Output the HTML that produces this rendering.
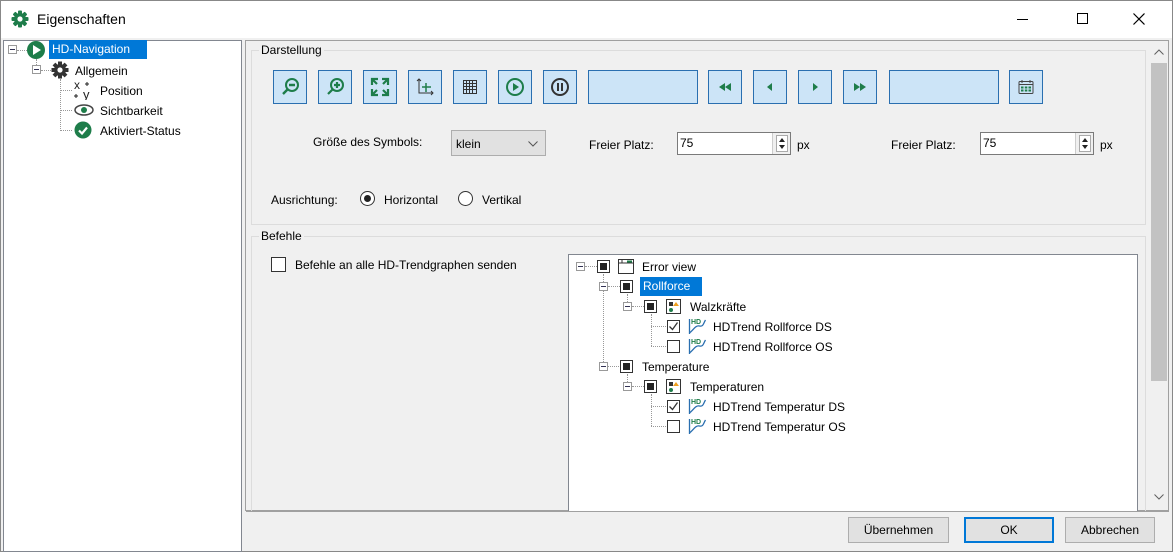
<!DOCTYPE html>
<html><head><meta charset="utf-8"><style>
*{box-sizing:border-box;margin:0;padding:0}
body{width:1173px;height:552px;background:#f0f0f0;font-family:"Liberation Sans",sans-serif;font-size:12px;color:#000;position:relative;overflow:hidden}
.a{position:absolute}
.win{left:0;top:0;width:1173px;height:552px;border:1px solid #888}
.title{left:1px;top:1px;width:1171px;height:37px;background:#fff}
.btn{position:absolute;width:34px;height:34px;background:#cce4f7;border:1px solid #2a6fb0;display:flex;align-items:center;justify-content:center}
.wide{width:110px}
.grp{position:absolute;border:1px solid #dcdcdc}
.lbl{position:absolute;background:#f0f0f0;padding:0 2px}
.inp{position:absolute;background:#fff;border:1px solid #7a7a7a;height:23px;padding:3px 2px}
.spin{position:absolute;right:0;top:0;width:18px;height:21px;border-left:1px solid #ccc;background:#f0f0f0}
.pb{position:absolute;top:517px;height:26px;border:1px solid #adadad;background:#e1e1e1;text-align:center;line-height:24px}
.cb{position:absolute;width:13px;height:13px;border:1px solid #333;background:#fff}
.cbf{position:absolute;width:13px;height:13px;border:1px solid #333;background:#fff}
.cbf:after{content:"";position:absolute;left:2px;top:2px;width:7px;height:7px;background:#222}
.pm{position:absolute;width:9px;height:9px;border:1px solid #999;background:#fff}
.pm:after{content:"";position:absolute;left:1px;top:3px;width:5px;height:1px;background:#335}
.dl{position:absolute;border-left:1px dotted #999}
.dh{position:absolute;border-top:1px dotted #999}
</style></head><body>
<div class="a win"></div>
<div class="a title"></div>
<svg class="a" style="left:11px;top:10px" width="18" height="18" viewBox="0 0 18 18"><g fill="#1e7d4a"><circle cx="9" cy="9" r="6"/><rect x="7" y="0.5" width="4" height="17" rx="1"/><rect x="0.5" y="7" width="17" height="4" rx="1"/><rect x="7" y="0.5" width="4" height="17" rx="1" transform="rotate(45 9 9)"/><rect x="7" y="0.5" width="4" height="17" rx="1" transform="rotate(-45 9 9)"/></g><circle cx="9" cy="9" r="2.6" fill="#fff"/></svg>
<div class="a" style="left:37px;top:11px;font-size:14px">Eigenschaften</div>
<div class="a" style="left:1017px;top:19px;width:11px;height:1px;background:#000"></div>
<div class="a" style="left:1077px;top:13px;width:11px;height:11px;border:1px solid #000"></div>
<svg class="a" style="left:1133px;top:13px" width="12" height="12"><path d="M0.5 0.5l11 11M11.5 0.5l-11 11" stroke="#000" stroke-width="1.2"/></svg>

<!-- left tree -->
<div class="a" style="left:3px;top:40px;width:239px;height:512px;background:#fff;border:1px solid #828790"></div>
<div class="pm" style="left:8px;top:45px"></div>
<div class="dh" style="left:17px;top:50px;width:10px"></div>
<div class="a" style="left:27px;top:41px;width:18px;height:18px;border-radius:50%;background:#1e7d4a"></div>
<div class="a" style="left:33px;top:45px;width:0;height:0;border-left:8px solid #fff;border-top:5px solid transparent;border-bottom:5px solid transparent"></div>
<div class="a" style="left:49px;top:40px;width:98px;height:19px;background:#0078d7;color:#fff;padding:2px 3px">HD-Navigation</div>
<div class="dl" style="left:36px;top:59px;height:6px"></div>
<div class="pm" style="left:32px;top:65px"></div>
<div class="dh" style="left:41px;top:70px;width:10px"></div>
<svg class="a" style="left:51px;top:61px" width="18" height="18" viewBox="0 0 18 18"><g fill="#333"><circle cx="9" cy="9" r="6"/><rect x="7" y="0.5" width="4" height="17"/><rect x="0.5" y="7" width="17" height="4"/><rect x="7" y="0.5" width="4" height="17" transform="rotate(45 9 9)"/><rect x="7" y="0.5" width="4" height="17" transform="rotate(-45 9 9)"/></g><circle cx="9" cy="9" r="2.6" fill="#fff"/></svg>
<div class="a" style="left:75px;top:64px">Allgemein</div>
<div class="dl" style="left:60px;top:79px;height:52px"></div>
<div class="dh" style="left:60px;top:90px;width:12px"></div>
<div class="dh" style="left:60px;top:110px;width:12px"></div>
<div class="dh" style="left:60px;top:130px;width:12px"></div>
<svg class="a" style="left:73px;top:80px" width="22" height="20"><text x="1" y="9" font-size="12" font-family="Liberation Sans" fill="#222">x</text><text x="10" y="19" font-size="13" font-family="Liberation Sans" fill="#222">y</text><path d="M3 14v4M1 16h4M14 2v4M12 4h4" stroke="#222" stroke-width="1"/></svg>
<div class="a" style="left:100px;top:84px">Position</div>
<svg class="a" style="left:74px;top:103px" width="20" height="14"><ellipse cx="10" cy="7" rx="9" ry="5" fill="none" stroke="#444" stroke-width="1.5"/><circle cx="10" cy="7" r="3" fill="#1e7d4a"/></svg>
<div class="a" style="left:100px;top:104px">Sichtbarkeit</div>
<svg class="a" style="left:74px;top:121px" width="18" height="18"><circle cx="9" cy="9" r="8.5" fill="#1e7d4a"/><path d="M5 9.5l3 3 5-6" stroke="#fff" stroke-width="2.2" fill="none"/></svg>
<div class="a" style="left:100px;top:124px">Aktiviert-Status</div>

<!-- right -->
<div class="a" style="left:245px;top:40px;width:924px;height:471px;border:1px solid #a0a0a0"></div>
<div class="a" style="left:1150px;top:41px;width:18px;height:469px;background:#f0f0f0"></div>
<div class="a" style="left:1151px;top:63px;width:16px;height:318px;background:#c2c2c2"></div>
<svg class="a" style="left:1154px;top:49px" width="10" height="6"><path d="M0.5 5.5l4.5-4.5 4.5 4.5" stroke="#606060" fill="none"/></svg>
<svg class="a" style="left:1154px;top:494px" width="10" height="6"><path d="M0.5 0.5l4.5 4.5 4.5-4.5" stroke="#606060" fill="none"/></svg>

<div class="grp" style="left:251px;top:50px;width:895px;height:175px"></div>
<div class="lbl" style="left:259px;top:43px">Darstellung</div>

<div class="btn" style="left:273px;top:70px"><svg width="22" height="22"><circle cx="13" cy="9" r="6" fill="none" stroke="#1e7d4a" stroke-width="2"/><path d="M10 9h6M9 13l-5 5" stroke="#1e7d4a" stroke-width="2.4"/></svg></div>
<div class="btn" style="left:318px;top:70px"><svg width="22" height="22"><circle cx="13" cy="9" r="6" fill="none" stroke="#1e7d4a" stroke-width="2"/><path d="M10 9h6M13 6v6M9 13l-5 5" stroke="#1e7d4a" stroke-width="2.2"/></svg></div>
<div class="btn" style="left:363px;top:70px"><svg width="20" height="20" stroke="#1e7d4a" stroke-width="2.2" fill="none"><path d="M2 8V2h6M3 3l4 4M18 8V2h-6M17 3l-4 4M2 12v6h6M3 17l4-4M18 12v6h-6M17 17l-4-4"/></svg></div>
<div class="btn" style="left:408px;top:70px"><svg width="20" height="20" stroke="#333" stroke-width="1" fill="none"><path d="M4 2v14h14M2 4l2-2 2 2M16 14l2 2-2 2"/><path d="M11 6v9M7 10h9" stroke="#1e7d4a" stroke-width="1.5"/></svg></div>
<div class="btn" style="left:453px;top:70px"><svg width="18" height="18" stroke="#333" fill="none"><rect x="2.5" y="2.5" width="13" height="13"/><path d="M5.5 2v14M8.5 2v14M11.5 2v14M2 5.5h14M2 8.5h14M2 11.5h14"/></svg></div>
<div class="btn" style="left:498px;top:70px"><svg width="20" height="20"><circle cx="10" cy="10" r="8" fill="none" stroke="#1e7d4a" stroke-width="2"/><path d="M8 6v8l6-4z" fill="#1e7d4a"/></svg></div>
<div class="btn" style="left:543px;top:70px"><svg width="20" height="20"><circle cx="10" cy="10" r="8" fill="none" stroke="#333" stroke-width="2"/><path d="M8 6v8M12 6v8" stroke="#333" stroke-width="2"/></svg></div>
<div class="btn wide" style="left:588px;top:70px"></div>
<div class="btn" style="left:708px;top:70px"><svg width="14" height="10" fill="#1e7d4a"><path d="M7 1v8L1 5zM13 1v8L7 5z"/></svg></div>
<div class="btn" style="left:753px;top:70px"><svg width="8" height="10" fill="#1e7d4a"><path d="M6 1v8L1 5z"/></svg></div>
<div class="btn" style="left:798px;top:70px"><svg width="8" height="10" fill="#1e7d4a"><path d="M2 1v8l5-4z"/></svg></div>
<div class="btn" style="left:843px;top:70px"><svg width="14" height="10" fill="#1e7d4a"><path d="M1 1v8l6-4zM7 1v8l6-4z"/></svg></div>
<div class="btn wide" style="left:889px;top:70px"></div>
<div class="btn" style="left:1009px;top:70px"><svg width="18" height="18"><rect x="2" y="3.5" width="14" height="12" rx="1" fill="none" stroke="#444"/><path d="M2 6.5h14M5 2v3M13 2v3" stroke="#444"/><g fill="#1e7d4a"><rect x="4" y="8.5" width="2.5" height="2"/><rect x="7.8" y="8.5" width="2.5" height="2"/><rect x="11.5" y="8.5" width="2.5" height="2"/><rect x="4" y="11.5" width="2.5" height="2"/><rect x="7.8" y="11.5" width="2.5" height="2"/><rect x="11.5" y="11.5" width="2.5" height="2"/></g></svg></div>

<div class="a" style="left:313px;top:135px">Größe des Symbols:</div>
<div class="a" style="left:451px;top:130px;width:95px;height:26px;border:1px solid #adadad;background:#e1e1e1;padding:6px 4px">klein</div>
<svg class="a" style="left:528px;top:141px" width="10" height="6"><path d="M0.5 0.5l4.5 4.5 4.5-4.5" stroke="#555" fill="none"/></svg>
<div class="a" style="left:589px;top:138px">Freier Platz:</div>
<div class="inp" style="left:677px;top:132px;width:114px">75<div class="spin"><svg style="position:absolute;left:3px;top:2px" width="12" height="17"><rect x="0.5" y="0.5" width="11" height="16" fill="#fff" stroke="#aaa"/><path d="M3 7l3-4 3 4zM3 10l3 4 3-4z" fill="#222"/></svg></div></div>
<div class="a" style="left:797px;top:138px">px</div>
<div class="a" style="left:891px;top:138px">Freier Platz:</div>
<div class="inp" style="left:980px;top:132px;width:114px">75<div class="spin"><svg style="position:absolute;left:3px;top:2px" width="12" height="17"><rect x="0.5" y="0.5" width="11" height="16" fill="#fff" stroke="#aaa"/><path d="M3 7l3-4 3 4zM3 10l3 4 3-4z" fill="#222"/></svg></div></div>
<div class="a" style="left:1100px;top:138px">px</div>

<div class="a" style="left:271px;top:193px">Ausrichtung:</div>
<div class="a" style="left:360px;top:191px;width:15px;height:15px;border:1px solid #333;border-radius:50%;background:#fff"></div>
<div class="a" style="left:364px;top:195px;width:7px;height:7px;border-radius:50%;background:#222"></div>
<div class="a" style="left:384px;top:193px">Horizontal</div>
<div class="a" style="left:458px;top:191px;width:15px;height:15px;border:1px solid #333;border-radius:50%;background:#fff"></div>
<div class="a" style="left:482px;top:193px">Vertikal</div>

<div class="grp" style="left:251px;top:236px;width:895px;height:290px"></div>
<div class="lbl" style="left:259px;top:229px">Befehle</div>
<div class="a" style="left:271px;top:257px;width:15px;height:15px;border:1px solid #333;background:#fff"></div>
<div class="a" style="left:295px;top:258px">Befehle an alle HD-Trendgraphen senden</div>

<div class="a" style="left:568px;top:254px;width:570px;height:258px;background:#fff;border:1px solid #828790"></div>
<div class="pm" style="left:576px;top:262px"></div><div class="dh" style="left:585px;top:266px;width:12px"></div>
<div class="cbf" style="left:597px;top:260px"></div>
<svg class="a" style="left:617px;top:258px" width="18" height="17"><rect x="1.5" y="1.5" width="15" height="14" fill="#fff" stroke="#333"/><path d="M1.5 5h15M5 1.5v3.5" stroke="#333"/><rect x="10" y="2.5" width="5" height="2" fill="#1e7d4a"/></svg>
<div class="a" style="left:642px;top:260px">Error view</div>
<div class="dl" style="left:603px;top:274px;height:92px"></div>
<div class="pm" style="left:599px;top:282px"></div><div class="dh" style="left:608px;top:286px;width:12px"></div>
<div class="cbf" style="left:620px;top:280px"></div>
<div class="a" style="left:640px;top:277px;width:62px;height:19px;background:#0078d7;color:#fff;padding:2px 3px">Rollforce</div>
<div class="dl" style="left:627px;top:294px;height:8px"></div>
<div class="pm" style="left:623px;top:302px"></div><div class="dh" style="left:632px;top:306px;width:12px"></div>
<div class="cbf" style="left:644px;top:300px"></div>
<svg class="a" style="left:665px;top:298px" width="17" height="17"><rect x="1.5" y="1.5" width="14" height="14" fill="#fff" stroke="#333"/><rect x="4" y="4" width="4" height="4" fill="#333"/><circle cx="6" cy="12" r="2" fill="#1e7d4a"/><path d="M11 4l3 4h-6z" fill="#f0a020"/></svg>
<div class="a" style="left:690px;top:300px">Walzkräfte</div>
<div class="dl" style="left:651px;top:314px;height:32px"></div>
<div class="dh" style="left:651px;top:326px;width:15px"></div><div class="dh" style="left:651px;top:346px;width:15px"></div>
<svg class="a" style="left:667px;top:320px" width="13" height="13"><rect x="0.5" y="0.5" width="12" height="12" fill="#fff" stroke="#333"/><path d="M2.5 6.5l3 3 5-7" stroke="#333" stroke-width="1.3" fill="none"/></svg>
<div class="cb" style="left:667px;top:340px"></div>
<div class="dh" style="left:607px;top:366px;width:12px"></div>
<div class="pm" style="left:599px;top:362px"></div>
<div class="cbf" style="left:620px;top:360px"></div>
<div class="a" style="left:642px;top:360px">Temperature</div>
<div class="dl" style="left:627px;top:374px;height:8px"></div>
<div class="pm" style="left:623px;top:382px"></div><div class="dh" style="left:632px;top:386px;width:12px"></div>
<div class="cbf" style="left:644px;top:380px"></div>
<svg class="a" style="left:665px;top:378px" width="17" height="17"><rect x="1.5" y="1.5" width="14" height="14" fill="#fff" stroke="#333"/><rect x="4" y="4" width="4" height="4" fill="#333"/><circle cx="6" cy="12" r="2" fill="#1e7d4a"/><path d="M11 4l3 4h-6z" fill="#f0a020"/></svg>
<div class="a" style="left:690px;top:380px">Temperaturen</div>
<div class="dl" style="left:651px;top:394px;height:32px"></div>
<div class="dh" style="left:651px;top:406px;width:15px"></div><div class="dh" style="left:651px;top:426px;width:15px"></div>
<svg class="a" style="left:667px;top:400px" width="13" height="13"><rect x="0.5" y="0.5" width="12" height="12" fill="#fff" stroke="#333"/><path d="M2.5 6.5l3 3 5-7" stroke="#333" stroke-width="1.3" fill="none"/></svg>
<div class="cb" style="left:667px;top:420px"></div>
<svg class="a" style="left:688px;top:317px" width="19" height="18"><text x="3" y="7" font-size="7" font-weight="bold" fill="#1e7d4a" font-family="Liberation Sans">HD</text><path d="M1.5 2v15M1.5 16c4-3 6-8 10-7s4-3 6-6" stroke="#2a6fb0" stroke-width="1.3" fill="none"/></svg>
<svg class="a" style="left:688px;top:337px" width="19" height="18"><text x="3" y="7" font-size="7" font-weight="bold" fill="#1e7d4a" font-family="Liberation Sans">HD</text><path d="M1.5 2v15M1.5 16c4-3 6-8 10-7s4-3 6-6" stroke="#2a6fb0" stroke-width="1.3" fill="none"/></svg>
<svg class="a" style="left:688px;top:397px" width="19" height="18"><text x="3" y="7" font-size="7" font-weight="bold" fill="#1e7d4a" font-family="Liberation Sans">HD</text><path d="M1.5 2v15M1.5 16c4-3 6-8 10-7s4-3 6-6" stroke="#2a6fb0" stroke-width="1.3" fill="none"/></svg>
<svg class="a" style="left:688px;top:417px" width="19" height="18"><text x="3" y="7" font-size="7" font-weight="bold" fill="#1e7d4a" font-family="Liberation Sans">HD</text><path d="M1.5 2v15M1.5 16c4-3 6-8 10-7s4-3 6-6" stroke="#2a6fb0" stroke-width="1.3" fill="none"/></svg>
<div class="a" style="left:713px;top:320px">HDTrend Rollforce DS</div>
<div class="a" style="left:713px;top:340px">HDTrend Rollforce OS</div>
<div class="a" style="left:713px;top:400px">HDTrend Temperatur DS</div>
<div class="a" style="left:713px;top:420px">HDTrend Temperatur OS</div>

<!-- bottom -->
<div class="a" style="left:246px;top:511px;width:923px;height:40px;background:#f0f0f0;border-top:1px solid #a0a0a0"></div>
<div class="pb" style="left:848px;width:101px">Übernehmen</div>
<div class="pb" style="left:964px;width:90px;border:2px solid #0078d7;line-height:22px">OK</div>
<div class="pb" style="left:1065px;width:90px">Abbrechen</div>
</body></html>
